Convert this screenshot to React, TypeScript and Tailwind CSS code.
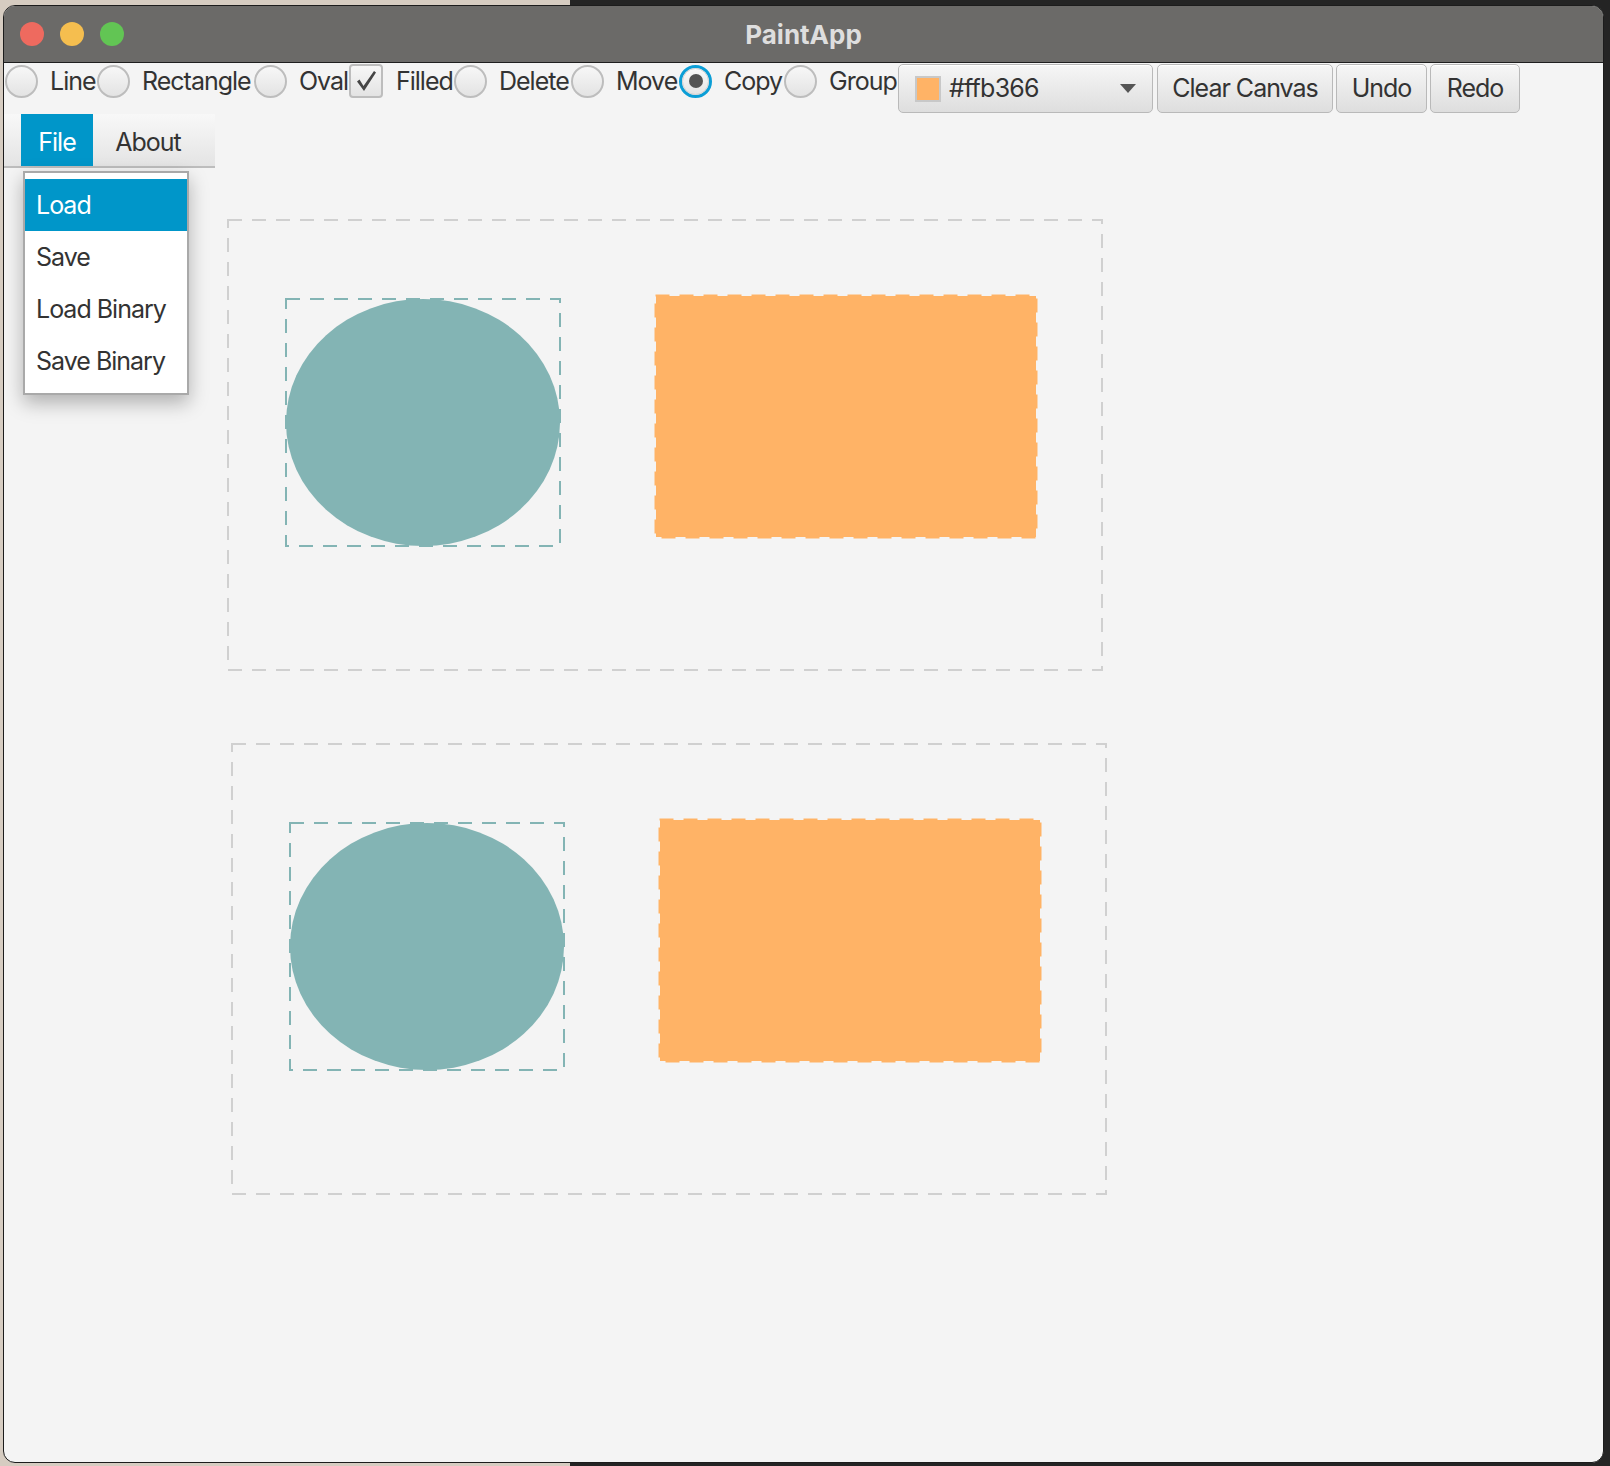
import React from "react";

const FONT = { fontFamily: "Inter, 'Noto Sans', sans-serif" };

function Radio({ label, w, selected }: { label: string; w: number; selected?: boolean }) {
  return (
    <div className="flex items-center h-[36px]">
      {selected ? (
        <div className="w-[33px] h-[33px] shrink-0 rounded-full border-[3px] border-[#0b9ed6] flex items-center justify-center bg-[#e9e9e9]">
          <div className="w-[27px] h-[27px] rounded-full border border-[#d2d2d2] bg-[linear-gradient(#fafafa,#e4e4e4)] flex items-center justify-center">
            <div className="w-[14px] h-[14px] rounded-full bg-[#545454]" />
          </div>
        </div>
      ) : (
        <div className="w-[33px] h-[33px] shrink-0 rounded-full border-2 border-[#bdbdbd] bg-[linear-gradient(#f7f7f7,#e3e3e3)]" />
      )}
      <span className="ml-[12px] whitespace-nowrap text-[25px] leading-none text-[#333] tracking-[-0.04em]" style={{ width: w }}>
        {label}
      </span>
    </div>
  );
}

function Btn({ label, w, ml }: { label: string; w: number; ml: string }) {
  return (
    <div
      className={`${ml} h-[49px] shrink-0 rounded-[5px] border border-[#b9b9b9] bg-[linear-gradient(#f6f6f6,#dedede)] shadow-[inset_0_1px_0_#ffffff] flex items-center justify-center text-[25px] leading-none text-[#333] tracking-[-0.04em]`}
      style={{ width: w }}
    >
      {label}
    </div>
  );
}

function Shapes({ dx, dy }: { dx: number; dy: number }) {
  return (
    <g transform={`translate(${dx} ${dy})`}>
      <rect x={228} y={220} width={874} height={450} fill="none" stroke="#d0d0d0" strokeWidth={2} strokeDasharray="14 10" />
      <ellipse cx={423} cy={422.5} rx={137} ry={123.5} fill="#83b4b4" />
      <rect x={286} y={299} width={274} height={247} fill="none" stroke="#83b4b4" strokeWidth={2} strokeDasharray="14 10" />
      <rect x={656} y={296} width={380} height={241} fill="#ffb366" />
      <rect x={655.5} y={295.5} width={381} height={242} fill="none" stroke="#ffb366" strokeWidth={2} strokeDasharray="14 10" />
    </g>
  );
}

export default function App() {
  return (
    <div
      className="w-[1610px] h-[1466px] overflow-hidden bg-[linear-gradient(to_right,#d6ccc1_570px,#242424_570px)] pt-[5px] pl-[3px]"
      style={FONT}
    >
      <div className="relative w-[1601px] h-[1458px] rounded-[12px] border border-[#1c1c1c] bg-[#f4f4f4] overflow-hidden flex flex-col">
        {/* Title bar */}
        <div className="relative h-[57px] shrink-0 bg-[#6b6a68] border-b border-[#1e1e1e] flex items-center justify-center">
          <div className="absolute left-[16px] top-[16px] flex gap-[16px]">
            <div className="w-[24px] h-[24px] rounded-full bg-[#ee6a5f]" />
            <div className="w-[24px] h-[24px] rounded-full bg-[#f5be4f]" />
            <div className="w-[24px] h-[24px] rounded-full bg-[#62c554]" />
          </div>
          <span className="text-[26px] font-bold text-[#dedede]">PaintApp</span>
        </div>

        {/* Toolbar */}
        <div className="h-[50px] shrink-0 flex items-start pl-[1px]">
          <Radio label="Line" w={47} />
          <Radio label="Rectangle" w={112} />
          <Radio label="Oval" w={50} />
          <div className="flex items-center h-[36px]">
            <div className="w-[34px] h-[34px] shrink-0 rounded-[4px] border-2 border-[#bdbdbd] bg-[linear-gradient(#f7f7f7,#e3e3e3)] flex items-center justify-center">
              <svg width="26" height="26" viewBox="0 0 26 26">
                <path d="M4 13.5 L6.5 11.5 L10.5 18 L21 3 L23 4.5 L11 23 Z" fill="#454545" />
              </svg>
            </div>
            <span className="ml-[13px] whitespace-nowrap text-[25px] leading-none text-[#333] tracking-[-0.04em] w-[58px]">Filled</span>
          </div>
          <Radio label="Delete" w={72} />
          <Radio label="Move" w={63} />
          <Radio label="Copy" w={60} selected />
          <Radio label="Group" w={69} />
          <div className="mt-[1px] w-[255px] h-[49px] shrink-0 rounded-[5px] border border-[#b9b9b9] bg-[linear-gradient(#f6f6f6,#dedede)] shadow-[inset_0_1px_0_#ffffff] flex items-center pl-[16px] pr-[16px]">
            <div className="w-[26px] h-[26px] border-2 border-[#c8c8c8] bg-[#ffb366]" />
            <span className="ml-[8px] text-[25px] leading-none text-[#333] tracking-[-0.03em]">#ffb366</span>
            <div className="ml-auto w-0 h-0 border-l-[8px] border-r-[8px] border-t-[9px] border-l-transparent border-r-transparent border-t-[#555]" />
          </div>
          <div className="mt-[1px] flex">
            <Btn label="Clear Canvas" w={176} ml="ml-[4px]" />
            <Btn label="Undo" w={91} ml="ml-[3px]" />
            <Btn label="Redo" w={90} ml="ml-[3px]" />
          </div>
        </div>

        {/* Menu bar */}
        <div className="mt-[1px] w-[211px] h-[54px] shrink-0 flex pl-[17px] bg-[linear-gradient(#f8f8f8,#e4e4e4)] border-b-2 border-[#bdbdbd]">
          <div className="w-[72px] h-full pt-[4px] bg-[#0096c9] text-white text-[25px] leading-none flex items-center justify-center tracking-[-0.04em]">File</div>
          <div className="w-[104px] h-full pt-[4px] pl-[6px] text-[#333] text-[25px] leading-none flex items-center justify-center tracking-[-0.04em]">About</div>
        </div>

        {/* Canvas */}
        <div className="flex-1">
          <svg width="1599" height="1295" viewBox="4 168 1599 1295" className="block">
            <Shapes dx={0} dy={0} />
            <Shapes dx={4} dy={524} />
          </svg>
        </div>

        {/* Dropdown menu */}
        <div className="absolute left-[19px] top-[165px] w-[166px] h-[224px] bg-white border-2 border-[#a9a9a9] shadow-[0_8px_18px_rgba(0,0,0,0.28)] pt-[6px]">
          <div className="h-[52px] bg-[#0096c9] text-white text-[25px] leading-none flex items-center pl-[11px] tracking-[-0.04em]">Load</div>
          <div className="h-[52px] text-[#333] text-[25px] leading-none flex items-center pl-[11px] tracking-[-0.04em]">Save</div>
          <div className="h-[52px] text-[#333] text-[25px] leading-none flex items-center pl-[11px] tracking-[-0.04em] whitespace-nowrap">Load Binary</div>
          <div className="h-[52px] text-[#333] text-[25px] leading-none flex items-center pl-[11px] tracking-[-0.04em] whitespace-nowrap">Save Binary</div>
        </div>
      </div>
    </div>
  );
}
